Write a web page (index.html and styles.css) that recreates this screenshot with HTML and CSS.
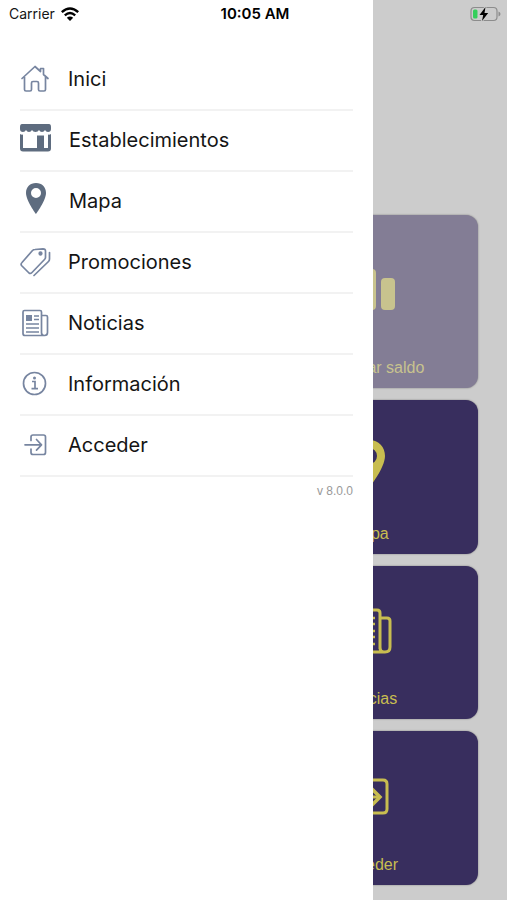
FILE: index.html
```html
<!DOCTYPE html>
<html lang="es">
<head>
<meta charset="utf-8">
<meta name="viewport" content="width=device-width, initial-scale=1">
<title>Menú</title>
<link rel="stylesheet" href="styles.css">
</head>
<body>
<main class="home">
  <a class="card card-disabled" href="#saldo">
    <svg class="card-icon" width="56" height="56" viewBox="0 0 56 56" fill="currentColor" aria-hidden="true">
      <rect x="3" y="25" width="14" height="26" rx="4"/><rect x="21" y="10" width="14" height="41" rx="4"/><rect x="40" y="19" width="14" height="32" rx="4"/>
    </svg>
    <span class="card-label">Consultar saldo</span>
  </a>
  <a class="card" href="#mapa">
    <svg class="card-icon" width="56" height="56" viewBox="0 0 56 56" fill="currentColor" aria-hidden="true">
      <path fill-rule="evenodd" d="M28 6C18 6 12 13 12 22c0 12 16 32 16 32s16-20 16-32c0-9-6-16-16-16zm0 8a8 8 0 1 1 0 16 8 8 0 0 1 0-16z"/>
    </svg>
    <span class="card-label">Mapa</span>
  </a>
  <a class="card" href="#noticias">
    <svg class="card-icon" width="56" height="56" viewBox="0 0 56 56" fill="none" stroke="currentColor" stroke-width="3" aria-hidden="true">
      <path d="M39 50V14q0-3-3-3H10q-3 0-3 3v35q0 4 4 4h33q5 0 5-5V22q0-3-3-3h-7M39 48q0 5 4 5"/>
      <path d="M27 19h7M27 25h7M13 32h21M13 38h21M13 45h21" stroke-width="2.5"/><path d="M13 18h9v9h-9z" fill="currentColor" stroke="none"/>
    </svg>
    <span class="card-label">Noticias</span>
  </a>
  <a class="card" href="#acceder">
    <svg class="card-icon" width="56" height="56" viewBox="0 0 56 56" fill="none" stroke="currentColor" stroke-width="3" aria-hidden="true">
      <path d="M17 23v-4q0-4 4-4h21q4 0 4 4v25q0 4-4 4H21q-4 0-4-4v-4M8 32h30"/><path d="M29 22l10 10-10 10" stroke-width="3.500"/>
    </svg>
    <span class="card-label">Acceder</span>
  </a>
</main>

<nav class="drawer" aria-label="Menú principal">
  <ul class="menu">
    <li><a class="menu-item" href="#inici">
      <svg class="menu-icon" width="32" height="32" viewBox="0 0 32 32" fill="none" stroke="currentColor" stroke-width="1.7" stroke-linejoin="round" stroke-linecap="round" aria-hidden="true">
        <path d="M2 15.500L15 3.500l5.500 5V5.500h3v6l4.500 4M4.500 14v12.500q0 1.500 1.500 1.500h4q1.500 0 1.500-1.500V20q0-1.500 1.500-1.500h4q1.500 0 1.500 1.500v6.500q0 1.500 1.500 1.500h4q1.500 0 1.500-1.500V14"/>
      </svg>
      <span>Inici</span></a></li>
    <li><a class="menu-item menu-item-solid" href="#establecimientos">
      <svg class="menu-icon" width="32" height="32" viewBox="0 0 32 32" fill="currentColor" aria-hidden="true">
        <path d="M2 0h27q2 0 2 3v2q0 3-3 3-2 0-3-2-1 2-3 2t-3-2q-1 2-3.500 2T12 6q-1 2-3 2T6 6Q5 8 3 8 0 8 0 5V3q0-3 2-3z"/>
        <path d="M0 10q1.500 1 3 .5V24h14V11.500h7V24h4V10.500q1.500.5 3-.5v14.500q0 3-3 3H3q-3 0-3-3z"/>
      </svg>
      <span>Establecimientos</span></a></li>
    <li><a class="menu-item menu-item-solid" href="#mapa">
      <svg class="menu-icon" width="32" height="32" viewBox="0 0 32 32" fill="currentColor" aria-hidden="true">
        <path fill-rule="evenodd" d="M16 -2C10 -2 6 2 6 8c0 7.500 10 21 10 21s10-13.500 10-21c0-6-4-10-10-10zm0 5a5 5 0 1 1 0 10 5 5 0 0 1 0-10z"/>
      </svg>
      <span>Mapa</span></a></li>
    <li><a class="menu-item" href="#promociones">
      <svg class="menu-icon" width="32" height="32" viewBox="0 0 32 32" fill="none" stroke="currentColor" stroke-width="1.700" stroke-linejoin="round" stroke-linecap="round" aria-hidden="true">
        <path d="M15 3.500l8-.7q2.500 0 2.500 2.200v6.500q0 1-1 2L12 26.500q-1.500 1.500-3 .5l-7.500-7.500q-1-1.500.5-3L12.500 4.500q1-1 2.500-1zM29.500 6.500V13q0 1.500-1 2.500L14 29.500"/>
        <circle cx="20.500" cy="7.500" r="1.300" fill="currentColor"/>
      </svg>
      <span>Promociones</span></a></li>
    <li><a class="menu-item" href="#noticias">
      <svg class="menu-icon" width="32" height="32" viewBox="0 0 32 32" fill="none" stroke="currentColor" stroke-width="1.700" stroke-linejoin="round" aria-hidden="true">
        <path d="M21.500 26V5Q21.500 3.500 20 3.500H4.500Q3 3.500 3 5v21.500Q3 28.500 5 28.500h19.500q3 0 3-3V10q0-1.500-1.500-1.500h-4.500M21.500 25.500q0 3 2.500 3"/>
        <path d="M14 9h5M14 12.500h5M6 17h13M6 21h13M6 25h13"/><path d="M6 8h6v6H6z" fill="currentColor" stroke="none"/>
      </svg>
      <span>Noticias</span></a></li>
    <li><a class="menu-item" href="#informacion">
      <svg class="menu-icon" width="32" height="32" viewBox="0 0 32 32" fill="none" stroke="currentColor" stroke-width="1.700" aria-hidden="true">
        <circle cx="14.500" cy="15.500" r="11"/><path d="M12 13.500h3v7M11.500 20.700h6.500"/><circle cx="14.500" cy="10" r="1.500" fill="currentColor" stroke="none"/>
      </svg>
      <span>Información</span></a></li>
    <li><a class="menu-item" href="#acceder">
      <svg class="menu-icon" width="32" height="32" viewBox="0 0 32 32" fill="none" stroke="currentColor" stroke-width="1.700" stroke-linejoin="round" stroke-linecap="round" aria-hidden="true">
        <path d="M11 11.500V8Q11 6 13 6h10.500q2 0 2 2v15.500q0 2-2 2H13q-2 0-2-2V20M5 15.800h16M16.500 10.500l5 5.300-5 5.300"/>
      </svg>
      <span>Acceder</span></a></li>
  </ul>
  <p class="version">v 8.0.0</p>
</nav>

<header class="status">
  <div class="carrier">
    <span>Carrier</span>
    <svg width="18" height="14" viewBox="0 0 18 14" fill="none" stroke="#000" stroke-width="2.400" aria-hidden="true">
      <path d="M.8 5.200q8.200-7.400 16.400 0M3.800 8.300q5.200-4.600 10.400 0"/><path d="M5.800 10.700q3.200-2.600 6.400 0L9 14z" fill="#000" stroke="none"/>
    </svg>
  </div>
  <time class="clock">10:05 AM</time>
  <svg class="battery" width="31" height="16" viewBox="0 0 31 16" aria-hidden="true">
    <rect x="1" y="1.500" width="26" height="13" rx="3.500" fill="none" stroke="#8c8c8c" stroke-width="1.200"/>
    <path d="M28.500 5.500q2 .8 2 2.500t-2 2.500z" fill="#8c8c8c"/>
    <rect x="3" y="3.500" width="4.500" height="9" rx="1.500" fill="#35cf5b"/>
    <path d="M15.500 1L9.500 9h3.700L12 15l6.200-8h-3.700z" fill="#000" stroke="#ccc" stroke-width="2" paint-order="stroke"/>
  </svg>
</header>
</body>
</html>
```
FILE: styles.css
```css
* {
  box-sizing: border-box;
}

body {
  margin: 0;
  position: relative;
  min-height: 100vh;
  background: #ccc;
  font-family: Inter, "Liberation Sans", sans-serif;
  color: #151515;
}

a {
  color: inherit;
  text-decoration: none;
}

/* Home screen behind the drawer */
.home {
  display: grid;
  grid-template-columns: 1fr 1fr;
  grid-template-rows: 173px repeat(3, 1fr);
  gap: 12px;
  min-height: 100vh;
  padding: 215px 29px 15px;
}

.card {
  grid-column: 2;
  display: flex;
  flex-direction: column;
  align-items: center;
  padding-bottom: 10px;
  border-radius: 12px;
  background: #382e5e;
  box-shadow: 0 0 2px rgba(0, 0, 0, 0.4);
  color: #c8bd50;
  font-family: "Liberation Sans", Arial, sans-serif;
  font-size: 16px;
  line-height: 20px;
}

.card-disabled {
  background: #837d95;
  color: #c8c38e;
}

.card-icon {
  margin: auto;
}

/* Side drawer */
.drawer {
  position: absolute;
  top: 0;
  bottom: 0;
  left: 0;
  width: min(80%, 373px);
  padding: 50px 20px 0;
  background: #fff;
}

.menu {
  margin: 0;
  padding: 0;
  list-style: none;
}

.menu-item {
  display: flex;
  align-items: center;
  gap: 16px;
  height: 61px;
  padding-bottom: 1px;
  border-bottom: 2px solid #f2f2f2;
  font-size: 20px;
  line-height: 24px;
}

.menu-icon {
  flex: none;
  overflow: visible;
  color: #7785a0;
}

.menu-item-solid {
  gap: 17px;
}

.menu-item-solid .menu-icon {
  color: #5e6c7f;
}

.version {
  margin: 6px 0 0;
  color: #999;
  font-family: "Liberation Sans", Arial, sans-serif;
  font-size: 12px;
  line-height: 16px;
  text-align: right;
}

/* Status bar */
.status {
  position: absolute;
  top: 0;
  left: 0;
  right: 0;
  display: grid;
  grid-template-columns: 1fr auto 1fr;
  align-items: center;
  height: 27px;
  padding: 0 6px 0 9px;
  font-size: 14px;
  line-height: 18px;
}

.carrier {
  display: flex;
  align-items: center;
  gap: 6px;
}

.clock {
  color: #000;
  font-size: 15px;
  font-weight: 600;
}

.battery {
  justify-self: end;
}
```
